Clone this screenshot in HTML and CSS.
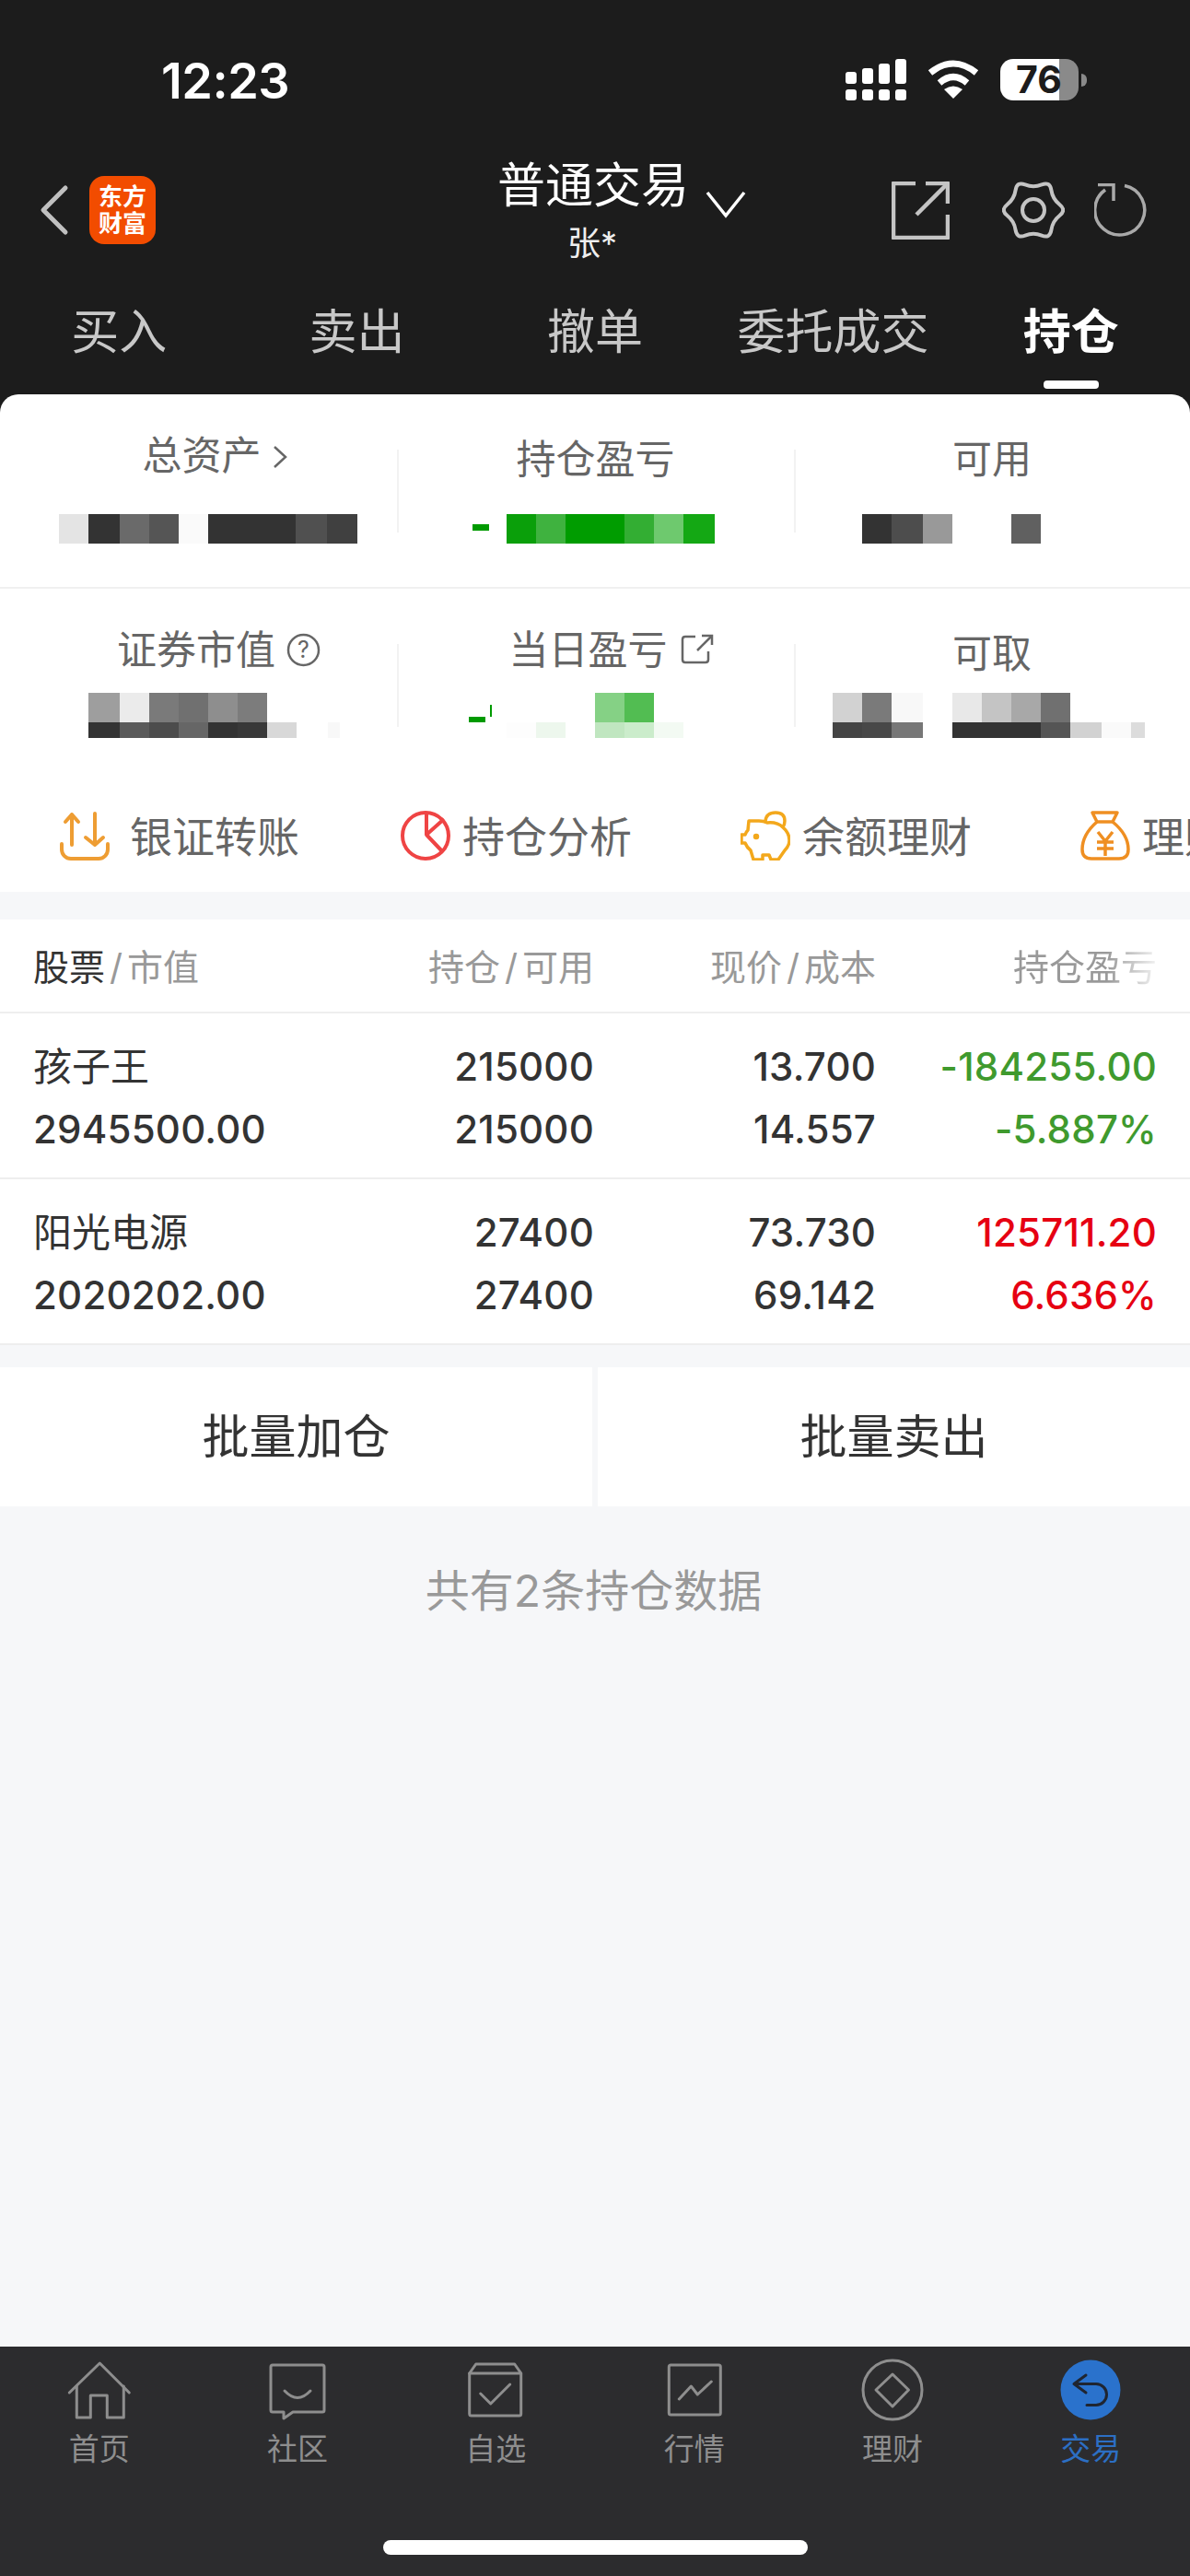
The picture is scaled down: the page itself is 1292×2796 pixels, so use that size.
FILE: index.html
```html
<!DOCTYPE html>
<html lang="zh-CN">
  <head>
    <meta charset="utf-8" />
    <title>持仓</title>
    <link rel="stylesheet" href="styles.css">
  </head>
  <body>
    <div class="phone">
      <header class="top">
        <div class="status">
          <span class="time">12:23</span>
          <div class="status-icons">
            <svg class="signal" viewBox="0 0 66 45" fill="#fff">
              <rect x="0" y="14" width="12" height="13" rx="3" />
              <rect x="18" y="10" width="12" height="17" rx="3" />
              <rect x="36" y="5" width="12" height="22" rx="3" />
              <rect x="54" y="0" width="12" height="27" rx="3" />
              <rect x="0" y="33" width="12" height="12" rx="3" />
              <rect x="18" y="33" width="12" height="12" rx="3" />
              <rect x="36" y="33" width="12" height="12" rx="3" />
              <rect x="54" y="33" width="12" height="12" rx="3" />
            </svg>
            <svg class="wifi" viewBox="0 0 58 42">
              <path d="M4 14Q29 -6 54 14" fill="none" stroke="#fff" stroke-width="7" />
              <path d="M14 25Q29 12 44 25" fill="none" stroke="#fff" stroke-width="7" />
              <path d="M29 42L19 32Q29 25 39 32Z" fill="#fff" />
            </svg>
            <div class="battery-wrap">
              <div class="battery">76</div>
              <span class="battery-nib"></span>
            </div>
          </div>
        </div>

        <div class="titlebar">
          <div class="title-left">
            <svg class="back" viewBox="0 0 32 56" fill="none" stroke="#c0c0c0" stroke-width="5" stroke-linecap="round" stroke-linejoin="round">
              <path d="M28 4L4 28L28 52" />
            </svg>
            <div class="logo">东方<br />财富</div>
          </div>
          <div class="title-mid">
            <div class="title-name">
              <span>普通交易</span>
              <svg class="title-arrow" viewBox="0 0 44 30" fill="none" stroke="#fff" stroke-width="3.5">
                <path d="M2 2L22 27L42 2" />
              </svg>
            </div>
            <div class="title-sub">张*</div>
          </div>
          <div class="title-right">
            <svg class="share" viewBox="0 0 63 63" fill="none" stroke="#c4c4c4" stroke-width="4.5" stroke-linejoin="round">
              <path d="M26 2H2V61H61V36" />
              <path d="M37 2H61V24" />
              <path d="M61 2L27 36" />
            </svg>
            <svg class="gear" viewBox="-34 -34 68 68" fill="none" stroke="#c4c4c4" stroke-width="4">
              <path d="M28.4 -6Q36 0 28.4 6Q20.8 12 19.4 21.6Q18 31.2 9 27.6Q0 24 -9 27.6Q-18 31.2 -19.4 21.6Q-20.8 12 -28.4 6Q-36 0 -28.4 -6Q-20.8 -12 -19.4 -21.6Q-18 -31.2 -9 -27.6Q0 -24 9 -27.6Q18 -31.2 19.4 -21.6Q20.8 -12 28.4 -6Z" />
              <circle cx="0" cy="0" r="12" />
            </svg>
            <svg class="refresh" viewBox="0 0 58 58" fill="none" stroke="#a9a9a9" stroke-width="3.5">
              <path d="M33 2.5A27 27 0 1 1 12 7" />
              <path d="M4 1.5H21V19" />
            </svg>
          </div>
        </div>

        <nav class="tabs">
          <div class="tab">买入</div>
          <div class="tab">卖出</div>
          <div class="tab">撤单</div>
          <div class="tab">委托成交</div>
          <div class="tab tab-on">持仓</div>
        </nav>
      </header>

      <section class="summary">
        <div class="stat-row stat-row-a">
          <div class="stat">
            <div class="stat-label label-first">
              总资产
              <svg class="label-chevron" viewBox="0 0 17 26" fill="none" stroke="#666" stroke-width="2.5"><path d="M2 2L14 13L2 24" /></svg>
            </div>
            <svg class="mosaic" viewBox="0 558 431 32" shape-rendering="crispEdges">
              <rect x="64" y="558" width="32" height="32" fill="#e4e4e4" />
              <rect x="96" y="558" width="34" height="32" fill="#333" />
              <rect x="130" y="558" width="32" height="32" fill="#6a6a6a" />
              <rect x="162" y="558" width="32" height="32" fill="#555" />
              <rect x="194" y="558" width="32" height="32" fill="#fafafa" />
              <rect x="226" y="558" width="95" height="32" fill="#333" />
              <rect x="321" y="558" width="34" height="32" fill="#505050" />
              <rect x="355" y="558" width="33" height="32" fill="#404040" />
            </svg>
          </div>
          <div class="stat stat-line">
            <div class="stat-label label-plain">持仓盈亏</div>
            <svg class="mosaic" viewBox="431 558 431 32" shape-rendering="crispEdges">
              <rect x="513" y="569" width="18" height="7" fill="#009a00" />
              <rect x="550" y="558" width="32" height="32" fill="#0a9f0a" />
              <rect x="582" y="558" width="32" height="32" fill="#3fb23f" />
              <rect x="614" y="558" width="64" height="32" fill="#009c00" />
              <rect x="678" y="558" width="32" height="32" fill="#33ae33" />
              <rect x="710" y="558" width="32" height="32" fill="#6ec96e" />
              <rect x="742" y="558" width="34" height="32" fill="#14a814" />
            </svg>
          </div>
          <div class="stat stat-line">
            <div class="stat-label label-plain">可用</div>
            <svg class="mosaic" viewBox="862 558 430 32" shape-rendering="crispEdges">
              <rect x="936" y="558" width="32" height="32" fill="#333" />
              <rect x="968" y="558" width="34" height="32" fill="#4d4d4d" />
              <rect x="1002" y="558" width="32" height="32" fill="#999" />
              <rect x="1098" y="558" width="32" height="32" fill="#606060" />
            </svg>
          </div>
        </div>

        <div class="stat-row stat-row-b">
          <div class="stat">
            <div class="stat-label label-first label-sec">
              证券市值
              <svg class="label-help" viewBox="0 0 37 37">
                <circle cx="18.5" cy="18.5" r="16.5" fill="none" stroke="#666" stroke-width="2.5" />
                <text x="18.5" y="27" text-anchor="middle" class="help-mark">?</text>
              </svg>
            </div>
            <svg class="mosaic mosaic-tall" viewBox="0 752 431 49" shape-rendering="crispEdges">
              <rect x="96" y="752" width="34" height="32" fill="#9e9e9e" />
              <rect x="130" y="752" width="32" height="32" fill="#ebebeb" />
              <rect x="162" y="752" width="32" height="32" fill="#7a7a7a" />
              <rect x="194" y="752" width="32" height="32" fill="#707070" />
              <rect x="226" y="752" width="32" height="32" fill="#8e8e8e" />
              <rect x="258" y="752" width="32" height="32" fill="#7c7c7c" />
              <rect x="96" y="784" width="34" height="17" fill="#333" />
              <rect x="130" y="784" width="32" height="17" fill="#5a5a5a" />
              <rect x="162" y="784" width="32" height="17" fill="#4c4c4c" />
              <rect x="194" y="784" width="32" height="17" fill="#666" />
              <rect x="226" y="784" width="32" height="17" fill="#333" />
              <rect x="258" y="784" width="32" height="17" fill="#383838" />
              <rect x="290" y="784" width="32" height="17" fill="#d8d8d8" />
              <rect x="356" y="784" width="13" height="17" fill="#f8f8f8" />
            </svg>
          </div>
          <div class="stat stat-line">
            <div class="stat-label label-first label-mid">
              当日盈亏
              <svg class="label-ext" viewBox="0 0 36 34" fill="none" stroke="#666" stroke-width="2.5">
                <path d="M16 3H5Q2 3 2 6V28Q2 31 5 31H27Q30 31 30 28V19" />
                <path d="M23 2H34V12" />
                <path d="M33 3L18 18" />
              </svg>
            </div>
            <svg class="mosaic mosaic-tall" viewBox="431 752 431 49" shape-rendering="crispEdges">
              <rect x="509" y="778" width="18" height="6" fill="#009a00" />
              <rect x="532" y="765" width="2" height="13" fill="#009a00" />
              <rect x="646" y="752" width="32" height="32" fill="#85d185" />
              <rect x="678" y="752" width="32" height="32" fill="#52bd52" />
              <rect x="550" y="784" width="32" height="17" fill="#fdfdfd" />
              <rect x="582" y="784" width="32" height="17" fill="#edf7ed" />
              <rect x="646" y="784" width="32" height="17" fill="#c0e6c0" />
              <rect x="678" y="784" width="32" height="17" fill="#cbeccb" />
              <rect x="710" y="784" width="32" height="17" fill="#f3faf3" />
            </svg>
          </div>
          <div class="stat stat-line">
            <div class="stat-label label-plain">可取</div>
            <svg class="mosaic mosaic-tall" viewBox="862 752 430 49" shape-rendering="crispEdges">
              <rect x="904" y="752" width="32" height="32" fill="#d2d2d2" />
              <rect x="936" y="752" width="32" height="32" fill="#7a7a7a" />
              <rect x="968" y="752" width="34" height="32" fill="#f8f8f8" />
              <rect x="1034" y="752" width="32" height="32" fill="#e8e8e8" />
              <rect x="1066" y="752" width="32" height="32" fill="#c4c4c4" />
              <rect x="1098" y="752" width="32" height="32" fill="#a8a8a8" />
              <rect x="1130" y="752" width="32" height="32" fill="#707070" />
              <rect x="904" y="784" width="32" height="17" fill="#444" />
              <rect x="936" y="784" width="32" height="17" fill="#484848" />
              <rect x="968" y="784" width="34" height="17" fill="#777" />
              <rect x="1034" y="784" width="96" height="17" fill="#333" />
              <rect x="1130" y="784" width="32" height="17" fill="#555" />
              <rect x="1162" y="784" width="34" height="17" fill="#d2d2d2" />
              <rect x="1196" y="784" width="32" height="17" fill="#fafafa" />
              <rect x="1228" y="784" width="15" height="17" fill="#dcdcdc" />
            </svg>
          </div>
        </div>
      </section>

      <section class="shortcuts">
        <div class="shortcut shortcut-first">
          <svg class="shortcut-icon" viewBox="0 0 54 54" fill="none" stroke="#ee9d33" stroke-width="4" stroke-linecap="round" stroke-linejoin="round">
            <path d="M13 37V4M6 12L13 4L20 12" />
            <path d="M38 3V37M28 29L38 37L47 29" />
            <path d="M2 36V42A10 10 0 0 0 12 52H42A10 10 0 0 0 52 42V36" />
          </svg>
          <span>银证转账</span>
        </div>
        <div class="shortcut">
          <svg class="shortcut-icon" viewBox="0 0 54 54" fill="none" stroke="#ef4444" stroke-width="4" stroke-linejoin="round">
            <circle cx="27" cy="27" r="25" />
            <path d="M28 2V26L47 9M28 26L46 45" />
          </svg>
          <span>持仓分析</span>
        </div>
        <div class="shortcut">
          <svg class="shortcut-icon" viewBox="0 0 54 54" fill="none" stroke="#f3a81c" stroke-width="3.5" stroke-linejoin="round">
            <path d="M9 11H20Q25 11 29 13Q40 12 46 18Q53 24 53 32Q53 38 48 43L41 53H33L31 48H24L24 53H14L11 43Q7 40 5 35H1V26H5Q6 23 8 21Z" />
            <path d="M27 11Q28 2 38 2Q48 2 48 11Q48 15 46 18" />
            <circle cx="17" cy="28" r="1.5" fill="#f3a81c" />
          </svg>
          <span>余额理财</span>
        </div>
        <div class="shortcut">
          <svg class="shortcut-icon" viewBox="0 0 54 54" fill="none" stroke="#ef8f22" stroke-width="3.5" stroke-linejoin="round">
            <path d="M13 2H40L35 12H18Z" />
            <path d="M18 12Q2 26 2 42Q2 52 12 52H42Q52 52 52 42Q52 26 35 12" />
            <path d="M19 23L27 33L35 23M18 34H36M18 41H36M27 33V49" />
          </svg>
          <span>理财</span>
        </div>
      </section>

      <section class="holdings">
        <div class="holdings-head">
          <div><span class="head-strong">股票</span><span class="slash">/</span>市值</div>
          <div class="cell-right">持仓<span class="slash">/</span>可用</div>
          <div class="cell-right">现价<span class="slash">/</span>成本</div>
          <div class="cell-right"><span class="head-fade">持仓盈亏</span></div>
        </div>

        <div class="holding">
          <div class="stock-name">孩子王</div>
          <div class="num cell-right">215000</div>
          <div class="num cell-right">13.700</div>
          <div class="num cell-right down">-184255.00</div>
          <div class="num">2945500.00</div>
          <div class="num cell-right">215000</div>
          <div class="num cell-right">14.557</div>
          <div class="num cell-right down">-5.887%</div>
        </div>

        <div class="holding">
          <div class="stock-name">阳光电源</div>
          <div class="num cell-right">27400</div>
          <div class="num cell-right">73.730</div>
          <div class="num cell-right up">125711.20</div>
          <div class="num">2020202.00</div>
          <div class="num cell-right">27400</div>
          <div class="num cell-right">69.142</div>
          <div class="num cell-right up">6.636%</div>
        </div>
      </section>

      <div class="batch">
        <div class="batch-btn">批量加仓</div>
        <div class="batch-btn">批量卖出</div>
      </div>

      <p class="total-note">共有2条持仓数据</p>

      <footer class="tabbar">
        <div class="tabbar-items">
          <div class="bar-item">
            <svg class="bar-icon" viewBox="0 0 72 72" fill="none" stroke="#8e8e8e" stroke-width="3" stroke-linejoin="round" stroke-linecap="round">
              <path d="M3.3 39L36.3 7L68.3 39" />
              <path d="M11.3 32V66H26.3V42H44.3V66H62.3V32" />
            </svg>
            <span>首页</span>
          </div>
          <div class="bar-item">
            <svg class="bar-icon" viewBox="0 0 72 72" fill="none" stroke="#8e8e8e" stroke-width="3" stroke-linejoin="round" stroke-linecap="round">
              <path d="M9 9H63Q65 9 65 11V58Q65 60 63 60H31L21 67V60H9Q7 60 7 58V11Q7 9 9 9Z" />
              <path d="M22 37Q36 52 50 37" />
            </svg>
            <span>社区</span>
          </div>
          <div class="bar-item">
            <svg class="bar-icon" viewBox="0 0 72 72" fill="none" stroke="#8e8e8e" stroke-width="3" stroke-linejoin="round" stroke-linecap="round">
              <path d="M14.7 8H56.7L63.7 18V62Q63.7 64 61.7 64H9.7Q7.7 64 7.7 62V18Z" />
              <path d="M7.7 18H63.7" />
              <path d="M19.7 40L30.7 51L51.7 30" />
            </svg>
            <span>自选</span>
          </div>
          <div class="bar-item">
            <svg class="bar-icon" viewBox="0 0 72 72" fill="none" stroke="#8e8e8e" stroke-width="3" stroke-linejoin="round" stroke-linecap="round">
              <rect x="8.3" y="9" width="56" height="54" rx="2" />
              <path d="M19.3 46L32.3 32L39.3 41L54.3 27" />
            </svg>
            <span>行情</span>
          </div>
          <div class="bar-item">
            <svg class="bar-icon" viewBox="0 0 72 72" fill="none" stroke="#8e8e8e" stroke-width="3" stroke-linejoin="round">
              <circle cx="36" cy="36" r="32" />
              <path d="M36 19L53.5 36L36 54L18 36Z" />
            </svg>
            <span>理财</span>
          </div>
          <div class="bar-item bar-item-on">
            <svg class="bar-icon" viewBox="0 0 72 72" fill="none">
              <circle cx="36" cy="36" r="32.5" fill="#2a72cc" />
              <path d="M31 20L18 29.5L31 39M18 29.5H42A11.5 11.5 0 0 1 42 52.5H32" stroke="#1f2530" stroke-width="3" stroke-linecap="round" stroke-linejoin="round" />
            </svg>
            <span>交易</span>
          </div>
        </div>
        <div class="home-bar"></div>
      </footer>
    </div>
  </body>
</html>
```

FILE: styles.css
```css
* {
  box-sizing: border-box;
}
html,
body {
  margin: 0;
  padding: 0;
}
body {
  font-family: Inter, "Noto Sans CJK SC", sans-serif;
  background-color: #f6f7f9;
}
svg {
  display: block;
  flex-shrink: 0;
}
.phone {
  width: 1292px;
  height: 2796px;
  overflow: hidden;
  display: flex;
  flex-direction: column;
  background-color: #f6f7f9;
}

/* top dark area */
.top {
  height: 448px;
  margin-bottom: -20px;
  background-color: #1c1c1c;
  flex-shrink: 0;
}
.status {
  height: 170px;
  display: flex;
  justify-content: space-between;
  padding: 58px 112px 0 175px;
}
.time {
  color: #fff;
  font-size: 54px;
  font-weight: 600;
  line-height: 60px;
  letter-spacing: -0.5px;
}
.status-icons {
  display: flex;
  align-items: flex-start;
  padding-top: 6px;
  gap: 22px;
}
.signal {
  width: 66px;
  height: 45px;
}
.wifi {
  width: 58px;
  height: 42px;
  margin-top: 1px;
}
.battery-wrap {
  display: flex;
  align-items: center;
  gap: 3px;
}
.battery {
  width: 85px;
  height: 45px;
  border-radius: 14px;
  background: linear-gradient(90deg, #fff 64px, #8a8a8a 64px);
  color: #1c1c1c;
  font-size: 41px;
  font-weight: 700;
  line-height: 45px;
  padding-left: 17px;
}
.battery-nib {
  width: 6px;
  height: 14px;
  border-radius: 0 7px 7px 0;
  background-color: #8a8a8a;
}

.titlebar {
  height: 114px;
  display: grid;
  grid-template-columns: 1fr 330px 1fr;
  align-items: center;
}
.title-left {
  display: flex;
  align-items: center;
  gap: 22px;
  padding-left: 43px;
}
.back {
  width: 32px;
  height: 56px;
}
.logo {
  width: 72px;
  height: 74px;
  border-radius: 16px;
  background-color: #f24c00;
  color: #fff;
  font-size: 26px;
  font-weight: 700;
  line-height: 29px;
  text-align: center;
  padding-top: 8px;
}
.title-mid {
  align-self: start;
  margin-top: 2px;
}
.title-name {
  display: flex;
  align-items: flex-end;
  gap: 18px;
  padding-left: 59px;
  color: #fff;
  font-size: 52px;
  line-height: 60px;
}
.title-arrow {
  width: 44px;
  height: 30px;
  margin-bottom: -5px;
}
.title-sub {
  color: #eee;
  font-size: 36px;
  line-height: 44px;
  margin-top: 10px;
  text-align: center;
  padding-right: 6px;
}
.title-right {
  display: flex;
  align-items: center;
  justify-content: flex-end;
  padding-right: 46px;
}
.share {
  width: 63px;
  height: 63px;
}
.gear {
  width: 68px;
  height: 68px;
  margin-left: 57px;
}
.refresh {
  width: 58px;
  height: 58px;
  margin-left: 32px;
}

.tabs {
  display: grid;
  grid-template-columns: repeat(5, 1fr);
  padding-top: 47px;
}
.tab {
  color: #c8c8c8;
  font-size: 52px;
  line-height: 60px;
  text-align: center;
}
.tab-on {
  color: #fff;
  font-weight: 700;
}
.tab-on::after {
  content: "";
  display: block;
  width: 60px;
  height: 9px;
  margin: 22px auto 0;
  border-radius: 4px;
  background-color: #fff;
}

/* account summary */
.summary {
  height: 402px;
  border-radius: 20px 20px 0 0;
  background-color: #fff;
  flex-shrink: 0;
}
.stat-row {
  display: grid;
  grid-template-columns: 431px 431px 430px;
}
.stat-row-a {
  height: 211px;
  border-bottom: 2px solid #f0f0f0;
}
.stat-row-b {
  height: 191px;
}
.stat-line {
  background: linear-gradient(#f2f2f2, #f2f2f2) 0 60px / 2px 90px no-repeat;
}
.stat-label {
  display: flex;
  justify-content: center;
  align-items: flex-start;
  color: #666;
  font-size: 43px;
  line-height: 50px;
  padding-top: 45px;
}
.stat-row-a .stat-label {
  height: 130px;
}
.stat-row-b .stat-label {
  height: 113px;
}
.label-first {
  padding-top: 41px;
  padding-left: 36px;
}
.label-sec {
  padding-left: 44px;
}
.label-mid {
  padding-left: 34px;
}
.label-chevron {
  width: 17px;
  height: 26px;
  margin: 14px 0 0 12px;
}
.label-help {
  width: 37px;
  height: 37px;
  margin: 7px 0 0 12px;
}
.help-mark {
  fill: #666;
  font-size: 25px;
}
.label-ext {
  width: 36px;
  height: 34px;
  margin: 8px 0 0 14px;
}
.mosaic {
  width: 100%;
  height: 32px;
}
.mosaic-tall {
  height: 49px;
}

/* shortcuts */
.shortcuts {
  height: 138px;
  display: flex;
  align-items: center;
  gap: 118px;
  padding: 16px 0 0 65px;
  background-color: #fff;
  overflow: hidden;
  flex-shrink: 0;
}
.shortcut {
  display: flex;
  align-items: center;
  gap: 13px;
  flex-shrink: 0;
  color: #666;
  font-size: 46px;
  line-height: 54px;
  white-space: nowrap;
}
.shortcut span {
  margin-top: 2px;
}
.shortcut-first {
  gap: 22px;
  margin-right: -8px;
}
.shortcut-icon {
  width: 54px;
  height: 54px;
}

/* holdings table */
.holdings {
  margin-top: 30px;
  background-color: #fff;
  flex-shrink: 0;
}
.holdings-head,
.holding {
  display: grid;
  grid-template-columns: 302px 307px 306px 305px;
  padding-left: 36px;
}
.holdings-head {
  height: 102px;
  align-items: center;
  border-bottom: 2px solid #eee;
  color: #999;
  font-size: 39px;
  padding-bottom: 3px;
}
.head-strong {
  color: #333;
}
.head-fade {
  background: linear-gradient(90deg, #999 65%, #f2f2f2 100%);
  -webkit-background-clip: text;
  background-clip: text;
  color: transparent;
}
.slash {
  margin: 0 5px;
}
.cell-right {
  text-align: right;
}
.holding {
  height: 180px;
  padding-top: 24px;
  grid-auto-rows: 68px;
  border-bottom: 2px solid #eee;
  line-height: 68px;
  color: #333;
}
.stock-name {
  font-size: 42px;
}
.num {
  font-size: 42px;
  font-weight: 500;
  letter-spacing: 0.2px;
  white-space: nowrap;
}
.down {
  color: #3f9a2e;
}
.up {
  color: #e60012;
}

.batch {
  display: flex;
  gap: 6px;
  margin-top: 24px;
  flex-shrink: 0;
}
.batch-btn {
  flex: 1;
  height: 151px;
  background-color: #fff;
  color: #333;
  font-size: 51px;
  line-height: 151px;
  text-align: center;
}
.total-note {
  margin: 62px 0 0;
  padding-right: 3px;
  color: #999;
  font-size: 48px;
  line-height: 60px;
  text-align: center;
}

/* bottom tab bar */
.tabbar {
  height: 249px;
  margin-top: auto;
  display: flex;
  flex-direction: column;
  background-color: #2c2c2e;
  padding-top: 11px;
}
.tabbar-items {
  display: grid;
  grid-template-columns: repeat(6, 1fr);
}
.bar-item {
  display: flex;
  flex-direction: column;
  align-items: center;
  gap: 8px;
  color: #8e8e8e;
  font-size: 33px;
  line-height: 40px;
}
.bar-item-on {
  color: #2c6fc4;
}
.bar-icon {
  width: 72px;
  height: 72px;
}
.home-bar {
  width: 461px;
  height: 16px;
  margin: auto auto 23px;
  border-radius: 8px;
  background-color: #fff;
}
```
